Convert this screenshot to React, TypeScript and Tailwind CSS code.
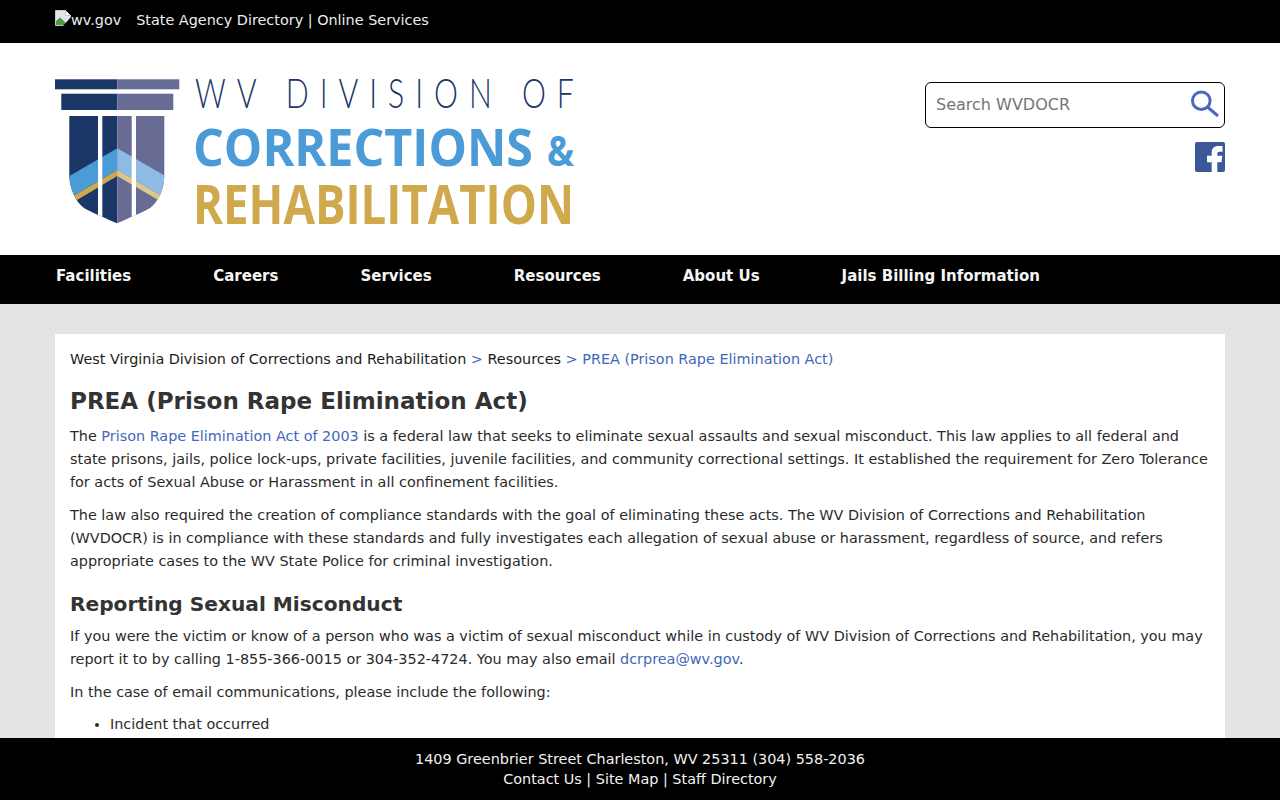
import React from "react";

const NAV_ITEMS = [
  "Facilities",
  "Careers",
  "Services",
  "Resources",
  "About Us",
  "Jails Billing Information",
];

function BrokenImageIcon() {
  return (
    <svg width="16" height="16" viewBox="0 0 16 16" className="mb-[5px] shrink-0">
      <path d="M0.5 0.5H10.5L15.5 5.5V15.5H0.5Z" fill="#dfe6ee" stroke="#c4c9cf" />
      <path d="M10.5 0.5V5.5H15.5Z" fill="#fff" stroke="#c4c9cf" />
      <path d="M1 15V11L5 7.5L10 12L12 15Z" fill="#4e9a3e" />
      <path d="M8 16L16 7V16Z" fill="#000" />
    </svg>
  );
}

function Logo() {
  return (
    <svg width="525" height="152" viewBox="55 75 525 152" className="block">
      <defs>
        <clipPath id="shield">
          <path d="M69.3 116H164.3V176C164 190 158 202 150 208C145 211 136 215 117 223.3C98 215 89 211 84 208C76 202 70 190 69.3 176Z" />
        </clipPath>
      </defs>
      <rect x="55" y="79.3" width="62.3" height="10" fill="#1b3768" />
      <rect x="117.3" y="79.3" width="62" height="10" fill="#686b93" />
      <rect x="61.3" y="93.7" width="56" height="16.3" fill="#1b3768" />
      <rect x="117.3" y="93.7" width="56" height="16.3" fill="#686b93" />
      <g clipPath="url(#shield)">
        <rect x="60" y="110" width="57.3" height="120" fill="#1b3768" />
        <rect x="117.3" y="110" width="60" height="120" fill="#686b93" />
        <path d="M60 181.5L117.3 148.3V170L60 204Z" fill="#4a9bd6" />
        <path d="M175 181.5L117.3 148.3V170L175 204Z" fill="#8fbae3" />
        <path d="M60 204L117.3 170V176L60 210Z" fill="#cfa94c" />
        <path d="M175 204L117.3 170V176L175 210Z" fill="#dcc88e" />
        <rect x="98" y="110" width="4.3" height="120" fill="#fff" />
        <rect x="131.7" y="110" width="4.3" height="120" fill="#fff" />
      </g>
      <g transform="scale(0.72 1)">
        <text x="271" y="108" fontFamily="Lato, sans-serif" fontWeight="300" fontSize="42" fill="#1b3768" textLength="526" lengthAdjust="spacing">
          WV DIVISION OF
        </text>
      </g>
      <text x="193" y="166" fontFamily="'Open Sans', sans-serif" fontWeight="700" fontSize="52" fill="#4a9bd6" textLength="340" lengthAdjust="spacingAndGlyphs">
        CORRECTIONS
      </text>
      <text x="547" y="166" fontFamily="'Open Sans', sans-serif" fontWeight="700" fontSize="42" fill="#4a9bd6" textLength="27" lengthAdjust="spacingAndGlyphs">
        &amp;
      </text>
      <text x="193" y="224" fontFamily="'Open Sans', sans-serif" fontWeight="700" fontSize="53" fill="#cfa94c" textLength="381" lengthAdjust="spacingAndGlyphs">
        REHABILITATION
      </text>
    </svg>
  );
}

function SearchBox() {
  return (
    <div className="flex h-[46px] w-[300px] items-center justify-between rounded-md border border-black bg-white pl-[10px] pr-[4px]">
      <span className="text-[16px] text-[#757575]">Search WVDOCR</span>
      <svg width="30" height="30" viewBox="0 0 30 30" fill="none" stroke="#4a69bd">
        <circle cx="11.3" cy="10.7" r="8.8" strokeWidth="3" />
        <path d="M17.5 17L28 26" strokeWidth="3" />
      </svg>
    </div>
  );
}

function FacebookIcon() {
  return (
    <svg width="30" height="30" viewBox="0 0 30 30">
      <rect width="30" height="30" rx="2" fill="#3b5998" />
      <path
        d="M16.7 30V20.3H12V13.7H16.7V10.5C16.7 6 19.5 4 23.5 4H27.5V9.7H24.5C23 9.7 22.3 10.5 22.3 12V13.7H27.3L26.5 20.3H22.3V30Z"
        fill="#fff"
      />
    </svg>
  );
}

export default function App() {
  return (
    <div className="min-h-screen bg-[#e4e4e4] font-['DejaVu_Sans',sans-serif] text-[14.4px] text-[#2b2b2b]">
      <div className="flex h-[43px] items-center bg-black px-[55px] pb-[1px] text-[#ededed]">
        <div className="flex items-center">
          <BrokenImageIcon />
          <span>wv.gov</span>
        </div>
        <span className="ml-[15px]">State Agency Directory | Online Services</span>
      </div>

      <header className="flex h-[212px] items-start justify-between bg-white px-[55px]">
        <div className="pt-[32px]">
          <Logo />
        </div>
        <div className="flex flex-col items-end gap-[14px] pt-[39px]">
          <SearchBox />
          <FacebookIcon />
        </div>
      </header>

      <nav className="flex h-[49px] items-center gap-[82px] bg-black pb-[6px] pl-[56px] text-[15px] font-bold text-[#f5f5f5]">
        {NAV_ITEMS.map((item) => (
          <span key={item}>{item}</span>
        ))}
      </nav>

      <main className="px-[55px] pb-[90px] pt-[30px]">
        <div className="bg-white px-[15px] pb-6 pt-[14px] leading-[23px]">
          <div className="text-[#3f68b9]">
            <span className="text-[#1c1c1c]">West Virginia Division of Corrections and Rehabilitation</span>
            {" > "}
            <span className="text-[#1c1c1c]">Resources</span>
            {" > PREA (Prison Rape Elimination Act)"}
          </div>
          <h1 className="mt-[15px] text-[23.04px] font-bold leading-[30px] text-[#333]">PREA (Prison Rape Elimination Act)</h1>
          <p className="mt-[9px]">
            The <span className="text-[#3f68b9]">Prison Rape Elimination Act of 2003</span> is a federal law that seeks
            to eliminate sexual assaults and sexual misconduct. This law applies to all federal and state prisons, jails,
            police lock-ups, private facilities, juvenile facilities, and community correctional settings. It established
            the requirement for Zero Tolerance for acts of Sexual Abuse or Harassment in all confinement facilities.
          </p>
          <p className="mt-[10px]">
            The law also required the creation of compliance standards with the goal of eliminating these acts. The WV
            Division of Corrections and Rehabilitation (WVDOCR) is in compliance with these standards and fully
            investigates each allegation of sexual abuse or harassment, regardless of source, and refers appropriate cases
            to the WV State Police for criminal investigation.
          </p>
          <h2 className="mt-[18px] text-[20.16px] font-bold leading-[26px] text-[#333]">Reporting Sexual Misconduct</h2>
          <p className="mt-[8px]">
            If you were the victim or know of a person who was a victim of sexual misconduct while in custody of WV
            Division of Corrections and Rehabilitation, you may report it to by calling 1-855-366-0015 or 304-352-4724.
            You may also email <span className="text-[#3f68b9]">dcrprea@wv.gov</span>.
          </p>
          <p className="mt-[10px]">In the case of email communications, please include the following:</p>
          <ul className="mt-[9px] list-disc pl-[40px]">
            <li>Incident that occurred</li>
            <li>Date and time of the incident</li>
            <li>Location of the incident</li>
          </ul>
        </div>
      </main>

      <footer className="fixed inset-x-0 bottom-0 flex h-[62px] flex-col items-center justify-center bg-black text-center leading-[20px] text-[#f2f2f2]">
        <div>1409 Greenbrier Street Charleston, WV 25311 (304) 558-2036</div>
        <div>Contact Us | Site Map | Staff Directory</div>
      </footer>
    </div>
  );
}
